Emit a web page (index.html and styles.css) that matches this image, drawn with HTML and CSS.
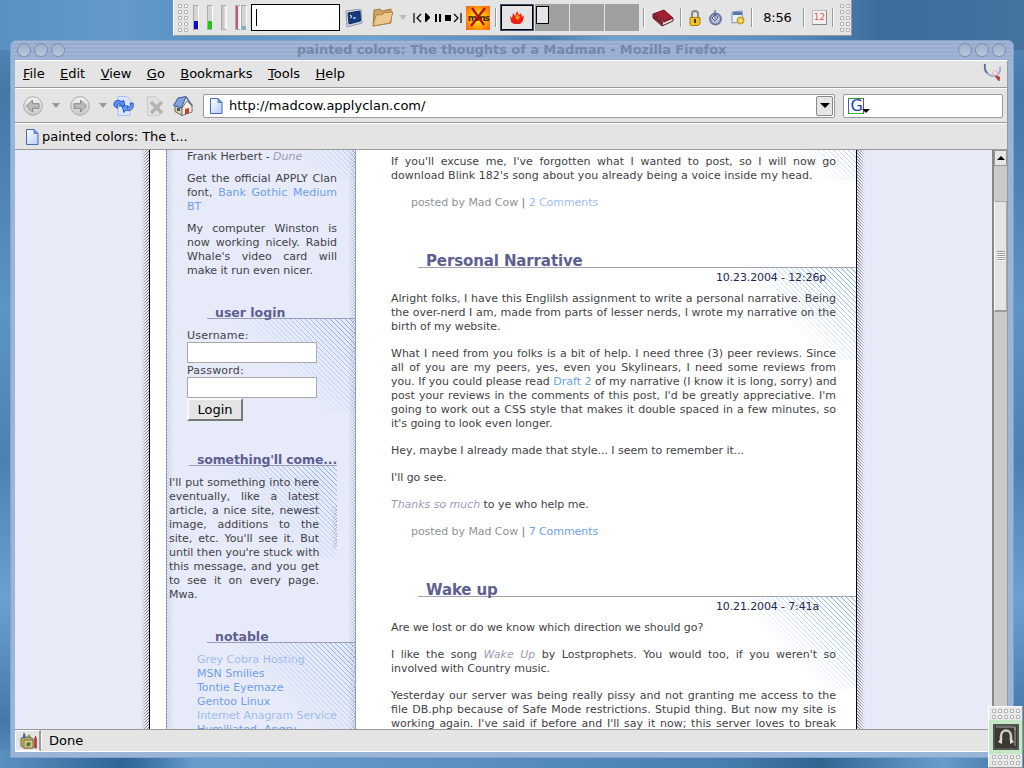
FILE: index.html
```html
<!DOCTYPE html>
<html lang="en">
<head>
<meta charset="utf-8">
<title>painted colors: The thoughts of a Madman</title>
<link rel="stylesheet" href="styles.css">
</head>
<body>
<svg width="0" height="0" class="defs">
  <defs>
    <linearGradient id="pg" x1="0" y1="0" x2="1" y2="1"><stop offset="0" stop-color="#fff"/><stop offset="1" stop-color="#b5cdfb"/></linearGradient>
    <symbol id="page" viewBox="0 0 13 16"><path d="M.5.5h7.500l4 4v11H.5z" fill="url(#pg)" stroke="#4468ba"/><path d="M8 .5v4h4z" fill="#7c9de8" stroke="#4468ba" stroke-width=".7"/></symbol>
    <linearGradient id="gg" x1="0" y1="0" x2="0" y2="1"><stop offset="0" stop-color="#f3f3f3"/><stop offset="1" stop-color="#c6c6c6"/></linearGradient>
    <symbol id="arrow" viewBox="0 0 20 20"><circle cx="10" cy="10" r="9.300" fill="url(#gg)" stroke="#aaa"/><path d="M3.500 10l6-6v3.700H16v4.600H9.500V16z" fill="#bbb" stroke="#8a8a8a"/></symbol>
  </defs>
</svg>

<main class="window">
  <header class="titlebar">
    <span class="knobs"><i></i><i></i><i></i></span>
    <span class="title">painted colors: The thoughts of a Madman - Mozilla Firefox</span>
    <span class="knobs"><i></i><i></i><i></i></span>
  </header>
  <div class="client">
    <nav class="menubar">
      <span><u>F</u>ile</span><span><u>E</u>dit</span><span><u>V</u>iew</span><span><u>G</u>o</span><span><u>B</u>ookmarks</span><span><u>T</u>ools</span><span><u>H</u>elp</span>
      <svg class="throbber" width="20" height="20" viewBox="0 0 20 20"><path d="M2 1C1 8 5 13 10 13C15 13 18 9 17 4" fill="none" stroke="#a3aedb" stroke-width="2"/><path d="M2 1C1 5 2 8 4 10" fill="none" stroke="#58658f" stroke-width="1.500"/><circle cx="12" cy="10" r="2.500" fill="#f9dddd" stroke="#e3b6be"/><path d="M12 13l4 5 .5-4z" fill="#c33" stroke="#a44"/></svg>
    </nav>
    <div class="navbar">
      <svg class="back" width="20" height="20"><use href="#arrow"/></svg>
      <i class="tri"></i>
      <svg class="fwd" width="20" height="20"><use href="#arrow"/></svg>
      <i class="tri"></i>
      <svg class="reload" width="21" height="20" viewBox="0 0 21 20"><path d="M5 .5h9l3 3v16H5z" fill="#dbe7ff" stroke="#a9c0f5"/><path d="M1 9c-.5-5 5-6 8-3l1.500-2 1.500 6H6l1.500-2C5 7 3.500 9 5 12 3 12 1.500 11 1 9z" fill="#5c92f5" stroke="#2552c8"/><path d="M20 7c1.500 6-3 9-7.500 7L11 16.500 9 10h6.500L14 12c3 .5 4-2 3.500-5z" fill="#6d9df7" stroke="#2552c8"/></svg>
      <svg class="stop" width="20" height="20" viewBox="0 0 20 20"><path d="M3.500.5h8l4 4v15h-12z" fill="#e0e0e0" stroke="#ccc"/><path d="M7 6l11 11M18 6L7 17" stroke="#b4b4b4" stroke-width="3.500"/></svg>
      <svg class="home" width="20" height="20" viewBox="0 0 20 20"><path d="M2 9l7 3v7.500l-7-4z" fill="#d9d3bc" stroke="#665"/><path d="M9 12l5-7 5 5v6l-10 3.500z" fill="#f6f0db" stroke="#776"/><path d="M.5 9.500L5 2l8-1.500L8.500 12z" fill="#7fa3dd" stroke="#405c9d"/><path d="M13 .8L19.500 10" stroke="#5c6f9a" stroke-width="1.500" fill="none"/><path d="M12 13l4-1v5l-4 1.500z" fill="#c33c40"/><path d="M4 12h3v3H4z" fill="#555"/></svg>
      <div class="url"><svg width="13" height="16"><use href="#page"/></svg><span>http://madcow.applyclan.com/</span><b class="drop"><i></i></b></div>
      <div class="search"><span class="g">G</span><i></i></div>
    </div>
    <div class="bookmarks"><svg width="13" height="16"><use href="#page"/></svg><span>painted colors: The t...</span></div>
    <div class="view">
      <div class="page">
        <div class="strip outl"></div>
        <div class="sheet">
          <aside class="side">
            <div class="txt pull"><i class="corner"></i><p><span class="e">Frank Herbert - <em>Dune</em></span></p>
              <p><span>Get the official APPLY Clan</span><span>font, <a>Bank Gothic Medium</a></span><span class="e"><a>BT</a></span></p>
              <p><span>My computer Winston is</span><span>now working nicely. Rabid</span><span>Whale's video card will</span><span class="e">make it run even nicer.</span></p></div>
            <h3 class="h-login">user login</h3>
            <div class="zone login">
              <i class="corner"></i>
              <label>Username:</label><input type="text"><label>Password:</label><input type="text"><button>Login</button>
            </div>
            <h3 class="h-some">something'll come...</h3>
            <div class="zone some">
              <i class="corner"></i><i class="tail"></i>
              <p><span>I'll put something into here</span><span>eventually, like a latest</span><span>article, a nice site, newest</span><span>image, additions to the</span><span>site, etc. You'll see it. But</span><span>until then you're stuck with</span><span>this message, and you get</span><span>to see it on every page.</span><span class="e">Mwa.</span></p>
            </div>
            <h3 class="h-note">notable</h3>
            <div class="zone note">
              <i class="corner"></i>
              <a class="seen">Grey Cobra Hosting</a><a>MSN Smilies</a><a>Tontie Eyemaze</a><a>Gentoo Linux</a><a class="seen">Internet Anagram Service</a><a>Humiliated, Angry</a>
            </div>
          </aside>
          <section class="posts">
            <article class="first">
              <i class="corner"></i>
              <p><span>If you'll excuse me, I've forgotten what I wanted to post, so I will now go</span><span class="e wide">download Blink 182's song about you already being a voice inside my head.</span></p>
              <p class="by">posted by Mad Cow <b>|</b> <a class="seen">2 Comments</a></p>
            </article>
            <h2>Personal Narrative</h2>
            <article>
              <i class="corner"></i>
              <time>10.23.2004 - 12:26p</time>
              <p><span>Alright folks, I have this Englilsh assignment to write a personal narrative. Being</span><span>the over-nerd I am, made from parts of lesser nerds, I wrote my narrative on the</span><span class="e">birth of my website.</span></p>
              <p><span>What I need from you folks is a bit of help. I need three (3) peer reviews. Since</span><span>all of you are my peers, yes, even you Skylinears, I need some reviews from</span><span class="tight">you. If you could please read <a>Draft 2</a> of my narrative (I know it is long, sorry) and</span><span>post your reviews in the comments of this post, I'd be greatly appreciative. I'm</span><span>going to work out a CSS style that makes it double spaced in a few minutes, so</span><span class="e">it's going to look even longer.</span></p>
              <p><span class="e">Hey, maybe I already made that style... I seem to remember it...</span></p>
              <p><span class="e">I'll go see.</span></p>
              <p><span class="e"><em>Thanks so much</em> to ye who help me.</span></p>
              <p class="by">posted by Mad Cow <b>|</b> <a>7 Comments</a></p>
            </article>
            <h2 class="w">Wake up</h2>
            <article>
              <i class="corner"></i>
              <time>10.21.2004 - 7:41a</time>
              <p><span class="e">Are we lost or do we know which direction we should go?</span></p>
              <p><span>I like the song <em>Wake Up</em> by Lostprophets. You would too, if you weren't so</span><span class="e">involved with Country music.</span></p>
              <p><span>Yesterday our server was being really pissy and not granting me access to the</span><span>file DB.php because of Safe Mode restrictions. Stupid thing. But now my site is</span><span>working again. I've said if before and I'll say it now; this server loves to break</span></p>
            </article>
          </section>
        </div>
        <div class="strip outr"></div>
      </div>
      <div class="scroll"><b class="up"><i></i></b><b class="thumb"><i></i></b></div>
    </div>
    <footer class="status">
      <b class="pop"><svg width="18" height="17" viewBox="0 0 18 17"><path d="M1 6l9-1 3 2v9H4l-3-2z" fill="#b5ab68" stroke="#776e3c"/><path d="M4 8h9v8H4z" fill="#d4cb87" stroke="#7d753f"/><path d="M6 12l2-2 3 1-1 3-3 .5z" fill="#4d7a42"/><path d="M3 6l1-5 2 5" fill="#4878d0" stroke="#345" stroke-width=".6"/><path d="M7 5l2-3 2 3" fill="#6ba84b"/><path d="M14.500 7l1-3 1 3v9h-2z" fill="#d3343b" stroke="#a44" stroke-width=".8"/></svg></b>
      <span>Done</span>
    </footer>
  </div>
</main>

<div class="panel">
  <i class="grip"></i>
  <div class="meters"><i class="blue"></i><i class="green"></i><i></i><i class="red"></i><i class="cyan"></i></div>
  <div class="cmd"><i></i></div>
  <svg class="term" width="18" height="18" viewBox="0 0 18 18"><path d="M1 2l15-2 1 14-15 4z" fill="#d3dbe8" stroke="#8a98b2"/><path d="M3 4l12-2 .5 10L4 15z" fill="#143b7c" stroke="#0d2b60"/><path d="M5 6l2 1.500L5 9M8 9h3" fill="none" stroke="#fff"/></svg>
  <svg class="folder" width="22" height="20" viewBox="0 0 22 20"><path d="M1 18L2 2l6-1 2 2 9-2v14z" fill="#cda461" stroke="#a37c41"/><path d="M1 18L4 7l7-.5 1-2 9-.5-3 11z" fill="#edc98e" stroke="#ae8448"/></svg>
  <i class="tri lite"></i>
  <svg class="media" width="49" height="10" viewBox="0 0 49 10"><path d="M1 0v10M8 1L4 5l4 4" fill="none" stroke="#000" stroke-width="1.200"/><path d="M12 0h1l4 4v1l-4 4h-1zM22 1h2v8h-2zM26 1h2v8h-2zM32 2h6v6h-6z"/><path d="M41 1l4 4-4 4M48 0v10" fill="none" stroke="#000" stroke-width="1.200"/></svg>
  <div class="mms"><span>mms</span><svg width="24" height="24" viewBox="0 0 24 24"><path d="M6 2l12 17M19 2L5 20" stroke="#b80c00" stroke-width="2.200"/></svg></div>
  <i class="sep"></i>
  <div class="pager"><div class="on"><svg width="16" height="14" viewBox="0 0 16 14"><path d="M1 5l2 2 1-5 2 3 2-5 2 4 2-2 1 4 2-2-1 6-3 3H5L2 11z" fill="#ef2115"/><path d="M8 3l3 3-2 3-3-2z" fill="#f7941d"/></svg></div><div><b></b></div><div></div><div></div></div>
  <i class="sep s2"></i>
  <svg class="book" width="22" height="18" viewBox="0 0 22 18"><path d="M1 5l11-4 9 8-9 4z" fill="#a32033" stroke="#751828"/><path d="M1 5v4l9 8 11-5V9l-9 4z" fill="#e4dede" stroke="#5e1d26"/><path d="M1 5l10 8v4L1 9z" fill="#841a2a"/></svg>
  <i class="sep s3"></i>
  <svg class="lock" width="12" height="16" viewBox="0 0 12 16"><path d="M3 8V4a3 3 0 0 1 6 0v4" fill="none" stroke="#888" stroke-width="2"/><path d="M1 7.500h10V14l-2 1.500H2L1 14z" fill="#f0c61c" stroke="#a98213"/><path d="M6 9v4" stroke="#443300" stroke-width="2"/></svg>
  <svg class="plug" width="15" height="16" viewBox="0 0 15 16"><circle cx="7.500" cy="9" r="5.500" fill="#b9bfe0" stroke="#70789f" stroke-width="2"/><path d="M7 0v9M7 5l3 2-3 4-3-3z" stroke="#4b5688" fill="#e1e5f8"/></svg>
  <svg class="disk" width="15" height="15" viewBox="0 0 15 15"><path d="M2 2l10-1 1 11-11 1z" fill="#e9edf7" stroke="#8490ad"/><path d="M3 2h9v3H3z" fill="#5878b5"/><circle cx="10.500" cy="10.500" r="3.500" fill="#edc72f" stroke="#b8901f"/><circle cx="10.500" cy="10.500" r="1" fill="#fff"/></svg>
  <i class="sep s4"></i>
  <span class="clock">8:56</span>
  <i class="sep s5"></i>
  <div class="cal">12</div>
  <i class="sep s6"></i>
  <i class="grip g2"></i>
</div>

<div class="dock"><i class="dots"></i><div class="app"><svg width="26" height="26" viewBox="0 0 26 26"><rect x="1" y="1" width="24" height="24" fill="#3c392e" stroke="#555" stroke-width="2"/><path d="M3 3h19v3M22 3v19" stroke="#aaa" fill="none"/><path d="M8 17v-5a5 5.500 0 0 1 10 0v5" fill="none" stroke="#cdcdc5" stroke-width="2.500"/><path d="M5 18l4-5v7zM21 18l-4-5v7z" fill="#dcdcd4"/></svg></div><i class="dots"></i></div>
</body>
</html>
```

FILE: styles.css
```css
* { box-sizing: border-box; }
html, body { height: 100%; }
body {
  margin: 0; overflow: hidden; position: relative; width: 1024px; height: 768px;
  font: 13px/16px "DejaVu Sans", sans-serif; color: #000;
  background:
    linear-gradient(90deg, #5a90c2 0, #6499ca 12%, #5a90c2 20%, #6ea4d3 36%, #5d92c3 47%, #4a7cab 53%, #6fa4d2 60%, #5a8fc0 76%, #3b6c9c 86%, #44739f 100%) 0 0 / 100% 50px no-repeat,
    linear-gradient(90deg, #5c90c0 0, #2f6594 12%, #4a80b3 16%, #6a9ccb 19%, #5a8fc0 45%, #4a80b0 70%, #316590 80%, #6a9ccb 92%, #3d6f9f 100%) 0 750px / 100% 18px no-repeat,
    linear-gradient(180deg, #5a90c0 0, #4478a7 12%, #5085b6 26%, #5c94c4 40%, #4c82b2 60%, #6ba1cf 78%, #4478a8 94%, #5e93c3 100%);
}
p, h2, h3 { margin: 0; }
i { font-style: normal; }
svg { display: block; flex: none; }
.defs { position: absolute; }

/* Window frame */
.window {
  position: absolute; left: 10px; top: 40px; width: 1004px; height: 718px;
  border-radius: 6px 6px 0 0; background: #9ab5d8; border: 1px solid #7ea3ca;
  padding: 0 5px 5px 4px; display: flex; flex-direction: column;
}
.titlebar {
  height: 19px; flex: none; margin: 0 -5px 0 -4px; padding: 0 7px 0 6px; border-radius: 5px 5px 0 0;
  display: flex; justify-content: space-between; align-items: center;
  background: repeating-linear-gradient(180deg, #a1b4d5 0, #a1b4d5 2px, #98abd0 2px, #98abd0 4px);
}
.title { font-weight: bold; color: #7488ac; font-size: 13px; margin-top: -2px; letter-spacing: -.07px; }
.knobs { display: flex; gap: 3px; margin-top: -2px; }
.knobs i { width: 14px; height: 14px; border-radius: 50%; border: 1.500px solid #7e8ca8; background: linear-gradient(#9fafca, #bac8df); }
.client { flex: 1; min-height: 0; background: #e4e4e4; display: flex; flex-direction: column; border-top: 1px solid #fff; border-right: 1px solid #999; }
.menubar { height: 27px; flex: none; border-bottom: 1px solid #999; display: flex; align-items: center; gap: 15.500px; padding: 0 4px 0 8px; letter-spacing: -.04px; }
.throbber { margin-left: auto; margin-top: -2px; }
.navbar { height: 35px; flex: none; border-top: 1px solid #fff; border-bottom: 1px solid #999; display: flex; align-items: center; padding: 0 4px 0 8px; }
.fwd { transform: scaleX(-1); margin-left: 10px; }
.tri { border: 4px solid transparent; border-top: 5px solid #999; border-bottom: 0; margin-left: 9px; }
.lite { border-top-color: #bbb; }
.reload { margin-left: 6px; }
.stop { margin-left: 10px; }
.home { margin-left: 9px; }
.url { width: 634px; height: 24px; margin-left: 10px; border: 1px solid #999; border-radius: 2px; background: #fff; display: flex; align-items: center; padding: 0 1px 0 6px; }
.url span { margin-left: 6px; }
.drop { margin-left: auto; width: 17px; height: 20px; border: 1px solid #888; border-radius: 2px; background: #e6e6e6; display: grid; place-items: center; }
.drop i, .search i { border: 5px solid transparent; border-top-color: #000; border-bottom: 0; }
.search { width: 160px; height: 24px; margin-left: 8px; border: 1px solid #999; border-radius: 2px; background: #fff; display: flex; align-items: center; padding-left: 4px; }
.g { width: 16px; height: 16px; border: 1px solid; border-color: #2d9a35 #d22 #3b3 #36c; color: #1d3fae; font: 16px/14px "DejaVu Sans", sans-serif; padding-left: 1px; }
.search i { border-width: 4px; border-bottom: 0; margin: 11px 0 0 -2px; }
.bookmarks { height: 27px; flex: none; border-top: 1px solid #fff; border-bottom: 1px solid #999; display: flex; align-items: center; padding-left: 11px; gap: 3px; letter-spacing: -.04px; }

/* Browser viewport */
.view { flex: 1; min-height: 0; display: flex; overflow: hidden; }
.page { width: 977px; flex: none; background: #e8ebf7; display: flex; padding-left: 126px; overflow: hidden; }
.strip { width: 8px; flex: none; }
.outl { background: linear-gradient(135deg, transparent 43%, #6c7182 43%, #6c7182 57%, transparent 57%) 0 0 / 3px 3px; mask: linear-gradient(90deg, transparent, #000 80%); }
.outr { background: linear-gradient(45deg, transparent 43%, #6c7182 43%, #6c7182 57%, transparent 57%) 0 0 / 3px 3px; mask: linear-gradient(270deg, transparent, #000 80%); }
.sheet { width: 708px; flex: none; background: #fff; border: solid #000; border-width: 0 1px; padding-left: 16px; display: flex; font-size: 11px; line-height: 14px; color: #3f3f46; }
.sheet p span { display: block; text-align: justify; text-align-last: justify; white-space: nowrap; }
.sheet p span.e { text-align-last: left; letter-spacing: -.04px; }
.sheet p span.wide { letter-spacing: .04px; }
.sheet p span.tight { letter-spacing: -.01px; }
.sheet em { color: #9d9bb4; }
.sheet a { color: #6e9eea; }
.sheet a.seen { color: #9dbdf2; }

/* Diagonal hatching that fades away from the top right corner */
.corner {
  width: 120px; height: 92px;
  background: linear-gradient(45deg, transparent 45%, #82b0f5 45%, #82b0f5 55%, transparent 55%) 0 0 / 5px 5px;
  mask: linear-gradient(225deg, #000 10%, transparent 60%);
}

.side { width: 190px; flex: none; border: solid #8f9dc0; border-width: 0 1px; background: #e7eaf9; position: relative; }
.side::before, .side::after { content: ""; position: absolute; top: 0; bottom: 0; width: 7px; }
.side::before { left: 0; background: linear-gradient(45deg, transparent 43%, #b4b9cc 43%, #b4b9cc 57%, transparent 57%) 0 0 / 3px 3px; mask: linear-gradient(270deg, transparent, #000); }
.side::after, .tail { background: linear-gradient(135deg, transparent 43%, #a0a5b8 43%, #a0a5b8 57%, transparent 57%) 0 0 / 3px 3px; mask: linear-gradient(90deg, transparent, #000); }
.side::after { right: 0; }
.txt { padding: 0 18px 0 20px; }
.pull { height: 155px; display: flex; flex-direction: column; gap: 8px; position: relative; }
.pull > p { position: relative; }
.pull > .corner { position: absolute; right: 0; top: -62px; }
h3 { font: bold 12.500px/16px "DejaVu Sans", sans-serif; color: #5d5f90; border-bottom: 1px solid #9a9cba; height: 14px; padding-left: 8px; white-space: nowrap; }
.h-login, .h-note { margin-left: 40px; }
.h-some { margin: 0 18px 0 22px; letter-spacing: -.15px; }
.zone { position: relative; display: flex; flex-direction: column; align-items: flex-start; }
.zone > * { position: relative; }
.zone > .corner, article > .corner { position: absolute; right: 0; top: 0; }
.zone > .tail { position: absolute; right: 0; top: 40px; width: 6px; height: 42px; }
.login { height: 133px; padding: 9px 0 0 20px; }
.login input { width: 130px; height: 21px; border: 1px solid #aaa; background: #fff; padding: 0; margin: 0; }
.login label { line-height: 16px; display: block; height: 14px; letter-spacing: .2px; }
.login button { width: 56px; height: 23px; margin: 0; padding: 0; background: #e4e4e4; font: 13px "DejaVu Sans", sans-serif; border: 2px solid; border-color: #f8f8f8 #777 #777 #f8f8f8; color: #000; }
.some { margin-right: 18px; height: 163px; padding: 10px 0 0 2px; }
.some p { width: 150px; }
.note { padding: 10px 0 0 30px; white-space: nowrap; }
.note a { letter-spacing: 0; }
.note a:nth-of-type(5) { letter-spacing: -.08px; }

.posts { width: 500px; flex: none; }
article { position: relative; padding: 3px 20px 0 35px; display: flex; flex-direction: column; gap: 13px; height: 315px; }
article > * { position: relative; }
article time { color: #25264d; line-height: 14px; margin-bottom: -6px; height: 14px; letter-spacing: -.13px; padding-left: 325px; white-space: nowrap; }
article.first { padding-top: 5px; height: 104px; }
article.first > .corner { top: -62px; }
p.by { padding-left: 20px; color: #929296; letter-spacing: -.06px; }
.by b { font-weight: normal; color: #777; }
h2 { font: bold 15px/14px "DejaVu Sans", sans-serif; color: #5d5f90; border-bottom: 1px solid #a0a1b5; margin-left: 62px; padding-left: 8px; height: 14px; letter-spacing: -.12px; }

/* Scrollbar */
.scroll { width: 16px; flex: none; background: #cacaca; border-left: 2px solid #888; border-right: 1px solid #fff; display: flex; flex-direction: column; }
.up { height: 16px; background: #e6e6e6; border: 1px solid #999; display: grid; place-items: center; }
.up i { border: 4px solid transparent; border-bottom-color: #000; border-top: 0; }
.thumb { margin-top: 35px; height: 111px; background: #e4e4e4; border: 1px solid #fff; border-right-color: #aaa; border-bottom: 2px solid #999; border-top-color: #aaa; display: grid; place-items: center; }
.thumb i { width: 8px; height: 10px; background: repeating-linear-gradient(#999 0, #999 1px, #fff 1px, #fff 2px); }

.status { height: 23px; flex: none; border-top: 1px solid #999; border-bottom: 1px solid #fff; display: flex; align-items: center; }
.pop { width: 26px; height: 21px; border: 1px solid #fff; border-right: 2px solid #999; padding: 1px 0 0 4px; }
.status span { padding-left: 7px; border-left: 1px solid #fff; }

/* Top panel */
.panel { position: absolute; left: 173px; top: 0; width: 679px; height: 36px; background: #e4e4e4; border: solid #999; border-width: 0 1px 1px 0; border-left: 1px solid #fff; display: flex; align-items: center; }
.grip, .dots { background: radial-gradient(circle at 50% 50%, #fff 0, #fff 1.100px, #b0b0b0 1.500px, #b0b0b0 2px, transparent 2.300px) 0 0 / 6px 6px; }
.grip { width: 12px; height: 30px; margin-left: 3px; flex: none; }
.meters { display: flex; margin-left: 4px; height: 25px; }
.meters i { width: 6px; margin-right: 8px; border: 1px solid #aaa; border-right-color: #fff; background: linear-gradient(90deg, #bbb, #eee); }
.meters .blue { background: linear-gradient(#d4d4d4 15px, #0a0ae0 15px); }
.meters .green { background: linear-gradient(#d4d4d4 15px, #0bd00b 15px); }
.meters .red { margin-right: 0; background: linear-gradient(90deg, #cb5068 2px, #eee 2px); }
.meters .cyan { margin-right: 4px; background: linear-gradient(#d4d4d4 20px, #6ab4c8 20px); }
.cmd { width: 90px; height: 27px; border: 1.500px solid #000; background: #fff; padding: 4px; }
.cmd i { display: block; width: 1px; height: 17px; background: #000; }
.term { margin-left: 5px; }
.folder { margin-left: 9px; }
.lite { margin-left: 5px; }
.media { margin-left: 6px; }
.mms { margin-left: 4px; width: 24px; height: 24px; background: radial-gradient(#ffe21a 20%, #ff9908 60%, #ff5c0a); position: relative; font: bold 9px/24px "DejaVu Sans", sans-serif; letter-spacing: -1px; text-align: center; color: #421; }
.mms svg { position: absolute; inset: 0; }
.sep { width: 2px; height: 19px; border-left: 1px solid #999; border-right: 1px solid #fff; margin-left: 5px; flex: none; }
.pager { margin-left: 3px; display: flex; gap: 1px; height: 27px; }
.pager div { width: 34px; background: #a0a0a0; padding: 2px 1px; }
.pager .on { background: #e4e4e4; outline: 1px solid #3e5078; outline-offset: -1px; border: 2px solid #000; display: grid; place-items: center; padding: 0; }
.pager b { display: block; width: 13px; height: 18px; border: 1px solid #000; background: #e4e4e4; }
.s2 { margin-left: 4px; }
.book { margin-left: 7px; }
.s3 { margin-left: 6px; }
.lock { margin-left: 7px; }
.plug { margin-left: 7px; }
.disk { margin-left: 7px; }
.s4 { margin-left: 6px; }
.clock { margin-left: 10px; width: 30px; white-space: nowrap; letter-spacing: -.2px; }
.s5 { margin-left: 10px; }
.cal { margin-left: 7px; width: 15px; height: 15px; background: #f4f0f0; border: 1px solid #bbb; border-right-color: #888; border-bottom-color: #888; color: #e05b5b; font: 9px/12px "DejaVu Sans", sans-serif; text-align: center; }
.s6 { margin-left: 5px; }
.g2 { margin-left: 5px; }

.dock { position: absolute; left: 988px; top: 706px; width: 35px; height: 62px; background: #e8e8e8; border: 1px solid #fff; border-right-color: #999; border-bottom-color: #999; display: flex; flex-direction: column; align-items: center; padding-top: 1px; }
.dots { width: 30px; height: 12px; }
.app { width: 33px; height: 34px; background: #c4e8c4; display: grid; place-items: center; }
```
